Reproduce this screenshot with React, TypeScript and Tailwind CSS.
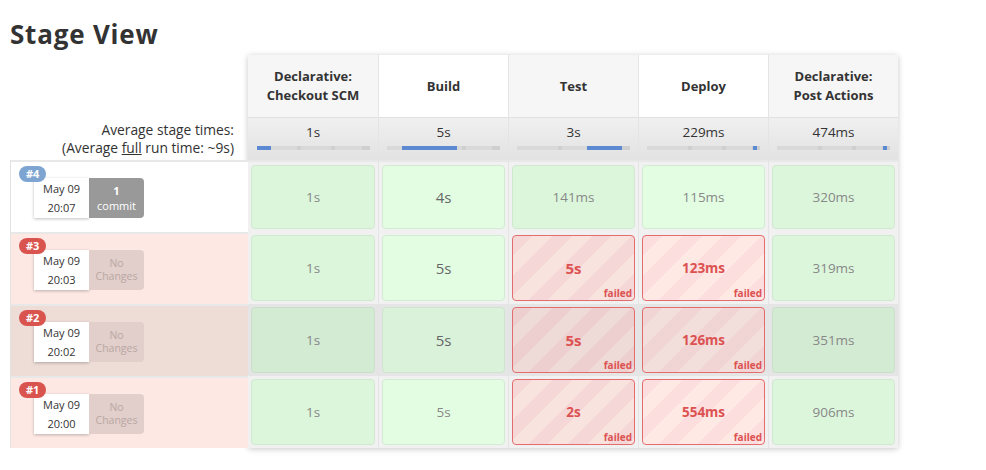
import React from "react";

type Cell =
  | { kind: "ok"; text: string; big?: boolean }
  | { kind: "fail"; text: string; big?: boolean };

type Run = {
  id: string;
  time: string;
  blue?: boolean;
  commit?: boolean;
  rowBg: string;
  areaBg: string;
  dark?: boolean;
  cells: Cell[];
};

const stages = [
  { name: ["Declarative:", "Checkout SCM"], avg: "1s", from: 0, to: 13, gray: true },
  { name: ["Build"], avg: "5s", from: 13, to: 62, gray: false },
  { name: ["Test"], avg: "3s", from: 62, to: 93, gray: true },
  { name: ["Deploy"], avg: "229ms", from: 94, to: 97, gray: false },
  { name: ["Declarative:", "Post Actions"], avg: "474ms", from: 94, to: 97, gray: true },
];

const runs: Run[] = [
  {
    id: "#4",
    time: "20:07",
    blue: true,
    commit: true,
    rowBg: "bg-white",
    areaBg: "bg-[#f1f1f1]",
    cells: [
      { kind: "ok", text: "1s" },
      { kind: "ok", text: "4s", big: true },
      { kind: "ok", text: "141ms" },
      { kind: "ok", text: "115ms" },
      { kind: "ok", text: "320ms" },
    ],
  },
  {
    id: "#3",
    time: "20:03",
    rowBg: "bg-[#fde8e4]",
    areaBg: "bg-[#f1f1f1]",
    cells: [
      { kind: "ok", text: "1s" },
      { kind: "ok", text: "5s", big: true },
      { kind: "fail", text: "5s", big: true },
      { kind: "fail", text: "123ms" },
      { kind: "ok", text: "319ms" },
    ],
  },
  {
    id: "#2",
    time: "20:02",
    rowBg: "bg-[#eedcd7]",
    areaBg: "bg-[#e5e5e5]",
    dark: true,
    cells: [
      { kind: "ok", text: "1s" },
      { kind: "ok", text: "5s", big: true },
      { kind: "fail", text: "5s", big: true },
      { kind: "fail", text: "126ms" },
      { kind: "ok", text: "351ms" },
    ],
  },
  {
    id: "#1",
    time: "20:00",
    rowBg: "bg-[#fde8e4]",
    areaBg: "bg-[#f1f1f1]",
    cells: [
      { kind: "ok", text: "1s" },
      { kind: "ok", text: "5s" },
      { kind: "fail", text: "2s" },
      { kind: "fail", text: "554ms" },
      { kind: "ok", text: "906ms" },
    ],
  },
];

function okClass(col: number, dark?: boolean) {
  const even = col % 2 === 1;
  if (dark) return even ? "bg-[#daf1da] border-[#cfe3cf]" : "bg-[#d3ead3] border-[#c9dfc9]";
  return even ? "bg-[#e3fde3] border-[#d3ebd3]" : "bg-[#dcf6dc] border-[#d0e8d0]";
}

function failClass(col: number, dark?: boolean) {
  const even = col % 2 === 1;
  if (dark)
    return even
      ? "bg-[repeating-linear-gradient(135deg,#f1d4d4_0px,#f1d4d4_14px,#f2dedb_14px,#f2dedb_28px)]"
      : "bg-[repeating-linear-gradient(135deg,#edcfcf_0px,#edcfcf_14px,#eedad6_14px,#eedad6_28px)]";
  return even
    ? "bg-[repeating-linear-gradient(135deg,#fddede_0px,#fddede_14px,#ffe9e5_14px,#ffe9e5_28px)]"
    : "bg-[repeating-linear-gradient(135deg,#f6d7d7_0px,#f6d7d7_14px,#f8e3df_14px,#f8e3df_28px)]";
}

export default function App() {
  return (
    <div className="w-[986px] h-[470px] bg-white text-[#333] font-['Open_Sans',sans-serif] relative overflow-hidden">
      <h1 className="absolute left-[10px] top-[17px] text-[26px] font-bold leading-[34px] tracking-[0.8px] text-[#333]">
        Stage View
      </h1>
      <div className="absolute left-[10px] top-[55px] flex">
        {/* left column */}
        <div className="w-[238px] flex flex-col">
          <div className="h-[62px]" />
          <div className="h-[43px] flex flex-col items-end justify-center pr-[14px] text-[13.8px] leading-[18px] text-[#333] shadow-[0_3px_3px_-2px_rgba(0,0,0,0.12)]">
            <div>Average stage times:</div>
            <div>
              (Average <span className="underline">full</span> run time: ~9s)
            </div>
          </div>
          <div className="border-l border-[#e2e2e2]">
            {runs.map((r) => (
              <div key={r.id} className={`h-[72px] border-t-2 border-[#e8e8e8] relative ${r.rowBg}`}>
                <div
                  className={`absolute left-[8px] top-[4px] z-10 h-[16px] px-[7px] rounded-full text-[11px] font-bold leading-[16px] text-white ${
                    r.blue ? "bg-[#7ea5d2]" : "bg-[#d9534f]"
                  }`}
                >
                  {r.id}
                </div>
                <div className="absolute left-[23px] top-[16px] flex h-[40px]">
                  <div className="w-[55px] bg-white shadow-[0_1px_3px_rgba(0,0,0,0.25)] flex flex-col items-center justify-center text-[11px] leading-[19px] text-[#333]">
                    <div>May 09</div>
                    <div>{r.time}</div>
                  </div>
                  {r.commit ? (
                    <div className="w-[55px] bg-[#999] rounded-r-[4px] flex flex-col items-center justify-center text-[11px] leading-[15px] text-white">
                      <div className="font-bold">1</div>
                      <div>commit</div>
                    </div>
                  ) : (
                    <div className="w-[55px] bg-[#e2ceca] rounded-r-[4px] flex flex-col items-center justify-center text-[10.5px] leading-[13px] text-[#b9a8a4]">
                      <div>No</div>
                      <div>Changes</div>
                    </div>
                  )}
                </div>
              </div>
            ))}
          </div>
        </div>

        {/* stage table */}
        <div className="flex shadow-[0_1px_6px_rgba(0,0,0,0.22)]">
          {stages.map((s, i) => (
            <div key={i} className={`w-[130px] flex flex-col ${i > 0 ? "border-l border-[#e4e4e4]" : ""}`}>
              <div
                className={`h-[62px] flex flex-col items-center justify-center text-[13px] font-bold leading-[19px] text-[#333] ${
                  s.gray ? "bg-[#f6f6f6]" : "bg-white"
                }`}
              >
                {s.name.map((n) => (
                  <div key={n}>{n}</div>
                ))}
              </div>
              <div className="h-[43px] bg-[linear-gradient(#f0f0f0,#e2e2e2)] border-t border-[#e0e0e0] flex flex-col items-center pt-[5px]">
                <div className="text-[13.5px] leading-[18px] text-[#333]">{s.avg}</div>
                <div className="mt-[5px] w-[113px] h-[4px] bg-[#d9d9d9] relative">
                  <div className="absolute left-[36%] top-0 w-[4px] h-[4px] bg-[#cfcfcf]" />
                  <div className="absolute left-[66%] top-0 w-[4px] h-[4px] bg-[#cfcfcf]" />
                  <div className="absolute right-0 top-0 w-[8px] h-[4px] bg-[#cfcfcf]" />
                  <div
                    className="absolute top-0 h-[4px] bg-[#5b8ad3]"
                    style={{ left: `${s.from}%`, width: `${s.to - s.from}%` }}
                  />
                </div>
              </div>
              {runs.map((r) => {
                const c = r.cells[i];
                return (
                  <div key={r.id} className={`h-[72px] p-[3px] ${r.areaBg} ${r.id === "#4" ? "border-t-2 border-[#e8e8e8]" : ""}`}>
                    {c.kind === "ok" ? (
                      <div
                        className={`h-full rounded-[4px] border flex items-center justify-center ${okClass(i, r.dark)} ${
                          c.big ? "text-[15px] text-[#666]" : "text-[13.5px] text-[#888]"
                        }`}
                      >
                        {c.text}
                      </div>
                    ) : (
                      <div
                        className={`h-full rounded-[4px] border-[1.5px] border-[#e36d6d] relative flex items-center justify-center font-bold text-[#dc5252] ${failClass(
                          i,
                          r.dark
                        )} ${c.big ? "text-[15px]" : "text-[13.5px]"}`}
                      >
                        {c.text}
                        <span className="absolute right-[2px] bottom-[0px] text-[10px] leading-[13px] font-bold text-[#dc5252]">
                          failed
                        </span>
                      </div>
                    )}
                  </div>
                );
              })}
            </div>
          ))}
        </div>
      </div>
    </div>
  );
}
